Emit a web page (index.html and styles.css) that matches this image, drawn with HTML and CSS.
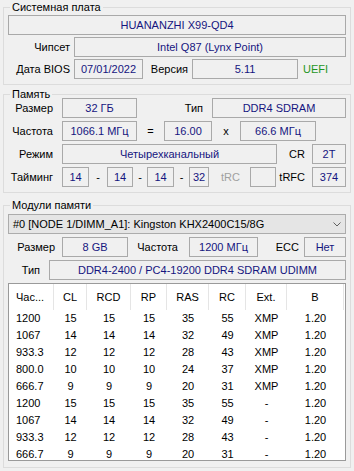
FILE: index.html
```html
<!DOCTYPE html>
<html lang="ru">
<head>
    <meta charset="UTF-8">
    <meta name="viewport" content="width=device-width, initial-scale=1.0">
    <title>Память</title>
    <link rel="stylesheet" href="styles.css">
</head>
<body>
    <fieldset class="group group-board">
        <legend>Системная плата</legend>
        <div class="rows">
            <div class="row">
                <div class="field grow">HUANANZHI X99-QD4</div>
            </div>
            <div class="row">
                <span class="label lbl-board">Чипсет</span>
                <div class="field grow">Intel Q87 (Lynx Point)</div>
            </div>
            <div class="row">
                <span class="label lbl-board">Дата BIOS</span>
                <div class="field w69">07/01/2022</div>
                <span class="label lbl-version">Версия</span>
                <div class="field w106">5.11</div>
                <span class="uefi">UEFI</span>
            </div>
        </div>
    </fieldset>

    <fieldset class="group group-memory">
        <legend>Память</legend>
        <div class="rows">
            <div class="row">
                <span class="label lbl-mem">Размер</span>
                <div class="field w75">32 ГБ</div>
                <span class="label lbl-type">Тип</span>
                <div class="field grow">DDR4 SDRAM</div>
            </div>
            <div class="row">
                <span class="label lbl-mem">Частота</span>
                <div class="field w75">1066.1 МГц</div>
                <span class="sign w27">=</span>
                <div class="field w48">16.00</div>
                <span class="sign w28">x</span>
                <div class="field w76">66.6 МГц</div>
            </div>
            <div class="row">
                <span class="label lbl-mem">Режим</span>
                <div class="field w215">Четырехканальный</div>
                <span class="label lbl-cr">CR</span>
                <div class="field grow">2T</div>
            </div>
            <div class="row">
                <span class="label lbl-mem">Тайминг</span>
                <div class="field w27">14</div>
                <span class="sign w18">-</span>
                <div class="field w26">14</div>
                <span class="sign w14">-</span>
                <div class="field w27">14</div>
                <span class="sign w15">-</span>
                <div class="field w20">32</div>
                <span class="label lbl-trc disabled">tRC</span>
                <div class="field w26"></div>
                <span class="label lbl-cr lbl-trfc">tRFC</span>
                <div class="field grow">374</div>
            </div>
        </div>
    </fieldset>

    <fieldset class="group group-modules">
        <legend>Модули памяти</legend>
        <div class="rows">
            <div class="select">
                <span>#0 [NODE 1/DIMM_A1]: Kingston KHX2400C15/8G</span>
                <svg width="8" height="5" viewBox="0 0 8 5">
                    <polyline points="0.5,0.5 4,4 7.5,0.5" fill="none" stroke="#606060" stroke-width="1"/>
                </svg>
            </div>
            <div class="row">
                <span class="label lbl-size">Размер</span>
                <div class="field w66">8 GB</div>
                <span class="label lbl-freq">Частота</span>
                <div class="field w69">1200 МГц</div>
                <span class="label lbl-ecc">ECC</span>
                <div class="field grow">Нет</div>
            </div>
            <div class="row">
                <span class="label lbl-kind">Тип</span>
                <div class="field grow">DDR4-2400 / PC4-19200 DDR4 SDRAM UDIMM</div>
            </div>
            <div class="timings">
                <div class="head first">Час...</div>
                <div class="head">CL</div>
                <div class="head">RCD</div>
                <div class="head">RP</div>
                <div class="head">RAS</div>
                <div class="head">RC</div>
                <div class="head">Ext.</div>
                <div class="head">В</div>

                <div class="first">1200</div><div>15</div><div>15</div><div>15</div><div>35</div><div>55</div><div>XMP</div><div>1.20</div>
                <div class="first">1067</div><div>14</div><div>14</div><div>14</div><div>32</div><div>49</div><div>XMP</div><div>1.20</div>
                <div class="first">933.3</div><div>12</div><div>12</div><div>12</div><div>28</div><div>43</div><div>XMP</div><div>1.20</div>
                <div class="first">800.0</div><div>10</div><div>10</div><div>10</div><div>24</div><div>37</div><div>XMP</div><div>1.20</div>
                <div class="first">666.7</div><div>9</div><div>9</div><div>9</div><div>20</div><div>31</div><div>XMP</div><div>1.20</div>
                <div class="first">1200</div><div>15</div><div>15</div><div>15</div><div>35</div><div>55</div><div>-</div><div>1.20</div>
                <div class="first">1067</div><div>14</div><div>14</div><div>14</div><div>32</div><div>49</div><div>-</div><div>1.20</div>
                <div class="first">933.3</div><div>12</div><div>12</div><div>12</div><div>28</div><div>43</div><div>-</div><div>1.20</div>
                <div class="first">666.7</div><div>9</div><div>9</div><div>9</div><div>20</div><div>31</div><div>-</div><div>1.20</div>
            </div>
        </div>
    </fieldset>
</body>
</html>
```

FILE: styles.css
```css
body {
    margin: 0;
    padding-top: 1px;
    width: 354px;
    height: 471px;
    overflow: hidden;
    background-color: #f0f0f0;
    font-family: 'Liberation Sans', Tahoma, Arial, sans-serif;
    font-size: 11px;
    color: #000;
    box-sizing: border-box;
}

.group {
    margin: 0 3px;
    padding: 2px 4px 5px;
    border: 1px solid #dcdcdc;
    min-width: 0;
}

.group legend {
    margin-left: 2px;
    padding: 0 2px;
    line-height: 12px;
}

.rows {
    display: flex;
    flex-direction: column;
    gap: 3px;
}

.group-board .rows {
    gap: 2px;
}

.group-memory {
    margin-top: 3px;
    padding-top: 0;
}

.group-memory .rows {
    margin-top: -2px;
}

.group-modules {
    margin-top: 6px;
    padding-top: 3px;
    padding-bottom: 6px;
}

.row {
    display: flex;
    align-items: center;
    height: 20px;
}

.field {
    height: 20px;
    line-height: 18px;
    box-sizing: border-box;
    border: 1px solid #a9a9a9;
    color: #15157f;
    text-align: center;
    white-space: nowrap;
    overflow: hidden;
}

.grow { flex: 1; }

.label {
    box-sizing: border-box;
    text-align: right;
    white-space: nowrap;
}

.sign {
    text-align: center;
}

.disabled {
    color: #a0a0a0;
}

.uefi {
    padding-left: 5px;
    color: #1e961e;
}

/* label columns */
.lbl-board { width: 66px; padding-right: 4px; }
.lbl-version { width: 49px; padding-right: 4px; }
.lbl-mem { width: 54px; padding-right: 9px; }
.lbl-type { width: 75px; padding-right: 9px; }
.lbl-cr { width: 35px; padding-right: 7px; }
.lbl-trc { width: 41px; padding-right: 10px; }
.lbl-trfc { width: 36px; }
.lbl-size { width: 54px; padding-right: 7px; }
.lbl-freq { width: 61px; padding-right: 11px; }
.lbl-ecc { width: 46px; padding-right: 5px; }
.lbl-kind { width: 41px; padding-right: 9px; }

/* fixed widths */
.w14 { width: 14px; }
.w15 { width: 15px; }
.w18 { width: 18px; }
.w20 { width: 20px; }
.w26 { width: 26px; }
.w27 { width: 27px; }
.w28 { width: 28px; }
.w48 { width: 48px; }
.w66 { width: 66px; }
.w69 { width: 69px; }
.w75 { width: 75px; }
.w76 { width: 76px; }
.w106 { width: 106px; }
.w215 { width: 215px; }

.select {
    display: flex;
    align-items: center;
    justify-content: space-between;
    height: 20px;
    padding: 0 4px;
    box-sizing: border-box;
    border: 1px solid #acacac;
    background-color: #e5e5e5;
    white-space: nowrap;
}

.timings {
    display: grid;
    grid-template-columns: 45px 33px 44px 36px 42px 37px 41px 57px;
    grid-template-rows: 26px;
    grid-auto-rows: 17px;
    height: 178px;
    box-sizing: border-box;
    overflow: hidden;
    border: 1px solid #9a9a9a;
    background-color: #fff;
}

.timings div {
    line-height: 17px;
    text-align: center;
    white-space: nowrap;
}

.timings .head {
    line-height: 26px;
    border-right: 1px solid #e5e5e5;
}

.timings .first {
    text-align: left;
    padding-left: 7px;
}
```
